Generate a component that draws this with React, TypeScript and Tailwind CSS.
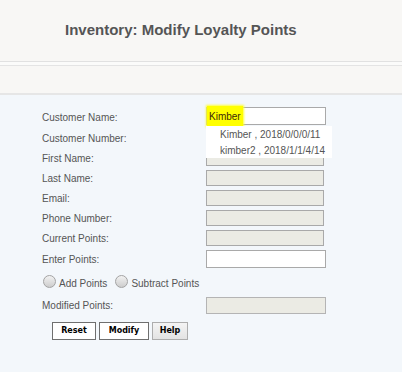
const fields = [
  { label: "Customer Number:" },
  { label: "First Name:" },
  { label: "Last Name:" },
  { label: "Email:" },
  { label: "Phone Number:" },
  { label: "Current Points:" },
];

const suggestions = ["Kimber , 2018/0/0/0/11", "kimber2 , 2018/1/1/4/14"];

function Radio({ label }: { label: string }) {
  return (
    <label className="flex items-end gap-[3px]">
      <span className="mb-[3px] h-[13px] w-[13px] rounded-full border border-[#a3a3a3] bg-gradient-to-b from-[#f2f2f2] to-[#cdcdcd]" />
      <span>{label}</span>
    </label>
  );
}

export default function App() {
  return (
    <div className="min-h-[372px] w-full bg-[#f3f7fb] font-['Liberation_Sans',Arial,sans-serif] text-[10px] text-[#555]">
      <header className="h-[62px] border-b border-[#e1e1e1] bg-[#f8f7f5] pl-[65px] pt-[20px]">
        <h1 className="text-[15px] font-bold leading-[20px] text-[#555]">
          Inventory: Modify Loyalty Points
        </h1>
      </header>
      <div className="h-[4px] border-b border-[#e4e4e4] bg-[#fbfbfa]" />
      <div className="h-[29px] border-b-2 border-[#e6e6e6] bg-[#f8f7f5]" />

      <form className="relative pl-[42px] pt-[11px]">
        <div className="flex h-[22px] items-center">
          <span className="w-[164px] shrink-0">Customer Name:</span>
          <div className="relative -mt-[2px] h-[18px] w-[120px] border border-[#a9a9a9] bg-white">
            <span className="absolute left-0 top-[-2px] flex h-[21px] items-center bg-[#ffff00] px-[2px] text-[#3b2a08] shadow-[0_0_2px_1px_#ffff33]">
              Kimber
            </span>
          </div>
        </div>

        {fields.map((f) => (
          <div key={f.label} className="flex h-[20px] items-center">
            <span className="w-[164px] shrink-0">{f.label}</span>
            <div className="h-[16px] w-[118px] border border-[#a9a9a9] bg-[#ebebe4]" />
          </div>
        ))}

        <div className="flex h-[22px] items-center">
          <span className="w-[164px] shrink-0">Enter Points:</span>
          <div className="h-[18px] w-[120px] border border-[#a9a9a9] bg-white" />
        </div>

        <div className="flex h-[21px] items-end gap-[8px] pl-[1px]">
          <Radio label="Add Points" />
          <Radio label="Subtract Points" />
        </div>

        <div className="flex h-[29px] items-center">
          <span className="w-[164px] shrink-0">Modified Points:</span>
          <div className="h-[17px] w-[120px] border border-[#b4b4b4] bg-[#ebebe4]" />
        </div>

        <div className="ml-[10px] mt-[2px] flex gap-[3px] font-['DejaVu_Sans',Verdana,sans-serif] text-[8px] font-bold text-black">
          <button type="button" className="h-[18px] w-[44px] border border-[#6f6f6f] bg-white">
            Reset
          </button>
          <button type="button" className="h-[18px] w-[50px] border border-[#6f6f6f] bg-white">
            Modify
          </button>
          <button type="button" className="h-[18px] w-[36px] border border-[#adadad] bg-gradient-to-b from-[#f4f4f4] to-[#e3e3e3]">
            Help
          </button>
        </div>

        <ul className="absolute left-[206px] top-[31px] w-[126px] bg-white">
          {suggestions.map((s) => (
            <li key={s} className="flex h-[16px] items-center pl-[14px]">
              {s}
            </li>
          ))}
        </ul>
      </form>
    </div>
  );
}
